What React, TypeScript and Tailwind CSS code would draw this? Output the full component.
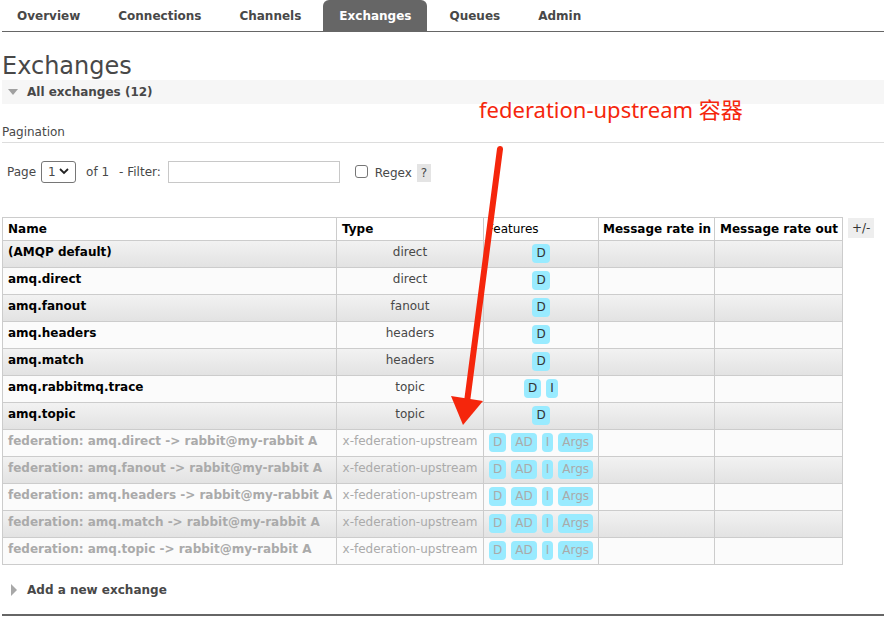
import React from "react";

type Row = { name: string; type: string; features: string[]; faded?: boolean };

const rows: Row[] = [
  { name: "(AMQP default)", type: "direct", features: ["D"] },
  { name: "amq.direct", type: "direct", features: ["D"] },
  { name: "amq.fanout", type: "fanout", features: ["D"] },
  { name: "amq.headers", type: "headers", features: ["D"] },
  { name: "amq.match", type: "headers", features: ["D"] },
  { name: "amq.rabbitmq.trace", type: "topic", features: ["D", "I"] },
  { name: "amq.topic", type: "topic", features: ["D"] },
  { name: "federation: amq.direct -> rabbit@my-rabbit A", type: "x-federation-upstream", features: ["D", "AD", "I", "Args"], faded: true },
  { name: "federation: amq.fanout -> rabbit@my-rabbit A", type: "x-federation-upstream", features: ["D", "AD", "I", "Args"], faded: true },
  { name: "federation: amq.headers -> rabbit@my-rabbit A", type: "x-federation-upstream", features: ["D", "AD", "I", "Args"], faded: true },
  { name: "federation: amq.match -> rabbit@my-rabbit A", type: "x-federation-upstream", features: ["D", "AD", "I", "Args"], faded: true },
  { name: "federation: amq.topic -> rabbit@my-rabbit A", type: "x-federation-upstream", features: ["D", "AD", "I", "Args"], faded: true },
];

const tabs = ["Overview", "Connections", "Channels", "Exchanges", "Queues", "Admin"];

export default function App() {
  return (
    <div className="relative w-[884px] h-[619px] overflow-hidden bg-white text-[#484848] font-['DejaVu_Sans',Verdana,sans-serif] text-[12px]">
      {/* NAV */}
      <div className="ml-[2px] border-b border-[#666] h-[32px]">
        <div className="flex -ml-[4px]">
          {tabs.map((t) => (
            <div
              key={t}
              className={`h-[31px] flex items-center px-[16px] mx-[3px] font-bold text-[12px] rounded-t-[6px] ${
                t === "Exchanges" ? "bg-[#666] text-white" : "text-[#484848]"
              }`}
            >
              {t}
            </div>
          ))}
        </div>
      </div>

      <div className="pl-[2px]">
        <h1 className="text-[24px] leading-[28px] mt-[20px] text-[#484848]">Exchanges</h1>

        {/* SECTION BAR */}
        <div className="h-[24px] bg-[#f6f6f6] flex items-center">
          <svg width="10" height="7" viewBox="0 0 10 7" className="ml-[6px] mr-[9px]">
            <path d="M0 0 L10 0 L5 6 Z" fill="#a0a0a0" />
          </svg>
          <span className="font-bold">All exchanges (12)</span>
        </div>

        <div className="mt-[19px] pb-[1px] border-b border-[#ddd] text-[12px]">Pagination</div>

        {/* PAGINATION ROW */}
        <div className="flex items-center mt-[17px] ml-[5px] h-[23px]">
          <span>Page</span>
          <div className="ml-[5px] w-[35px] h-[22px] border border-[#767676] rounded-[3px] flex items-center justify-between px-[6px]">
            <span>1</span>
            <svg width="10" height="7" viewBox="0 0 10 7">
              <path d="M1 1 L5 5 L9 1" stroke="#222" strokeWidth="1.8" fill="none" />
            </svg>
          </div>
          <span className="ml-[10px]">of 1</span>
          <span className="ml-[10px]">- Filter:</span>
          <div className="ml-[7px] w-[172px] h-[22px] border border-[#c8c8c8]" />
          <div className="ml-[15px] w-[13px] h-[13px] border border-[#767676] rounded-[3px]" />
          <span className="ml-[7px] mt-[2px]">Regex</span>
          <span className="ml-[5px] mt-[2px] bg-[#e4e4e4] px-[4px] h-[18px] leading-[18px]">?</span>
        </div>

        {/* TABLE */}
        <div className="flex items-start mt-[34px]">
          <table className="table-fixed border-collapse w-[840px]">
            <colgroup>
              <col className="w-[334px]" />
              <col className="w-[147px]" />
              <col className="w-[115px]" />
              <col className="w-[116px]" />
              <col className="w-[128px]" />
            </colgroup>
            <thead>
              <tr className="h-[23px] bg-white text-black">
                <th className="border border-[#ccc] text-left font-bold px-[5px] align-middle">Name</th>
                <th className="border border-[#ccc] text-left font-bold px-[5px] align-middle">Type</th>
                <th className="border border-[#ccc] text-left font-normal px-[3px] align-middle">Features</th>
                <th className="border border-[#ccc] text-left font-bold px-[4px] align-middle whitespace-nowrap">Message rate in</th>
                <th className="border border-[#ccc] text-left font-bold px-[5px] align-middle whitespace-nowrap">Message rate out</th>
              </tr>
            </thead>
            <tbody>
              {rows.map((r, i) => (
                <tr
                  key={r.name}
                  className={`h-[27px] ${i % 2 === 0 ? "bg-linear-to-b from-[#f2f2f2] to-[#e2e2e2]" : "bg-[#fbfbfb]"}`}
                >
                  <td
                    className={`border border-[#ccc] align-top pt-[2px] px-[5px] font-bold whitespace-nowrap ${
                      r.faded ? "text-[#aaa]" : "text-black"
                    }`}
                  >
                    {r.name}
                  </td>
                  <td
                    className={`border border-[#ccc] align-top pt-[2px] px-[3px] text-center whitespace-nowrap ${
                      r.faded ? "text-[#aaa]" : "text-[#484848]"
                    }`}
                  >
                    {r.type}
                  </td>
                  <td className="border border-[#ccc] align-top pt-[2px]">
                    <div className="flex justify-center gap-[5px]">
                      {r.features.map((f) => (
                        <span
                          key={f}
                          className={`bg-[#99ebff] rounded-[4px] px-[4px] h-[19px] leading-[19px] mt-[1px] ${
                            r.faded ? "text-[#aaa]" : "text-[#333]"
                          }`}
                        >
                          {f}
                        </span>
                      ))}
                    </div>
                  </td>
                  <td className="border border-[#ccc]" />
                  <td className="border border-[#ccc]" />
                </tr>
              ))}
            </tbody>
          </table>
          <span className="ml-[5px] mt-[1px] bg-[#eee] px-[4px] h-[20px] leading-[20px] text-[#333]">+/-</span>
        </div>

        {/* ADD NEW */}
        <div className="flex items-center mt-[17px] h-[16px]">
          <svg width="7" height="12" viewBox="0 0 7 12" className="ml-[9px] mr-[9px]">
            <path d="M0 0 L6 6 L0 12 Z" fill="#a8a8a8" />
          </svg>
          <span className="font-bold text-[#484848]">Add a new exchange</span>
        </div>
        <div className="mt-[16px] border-b-2 border-[#666]" />
      </div>

      {/* ANNOTATION */}
      <div className="absolute left-[479px] top-[94px] text-[22px] leading-[30px] text-[#f5260c] font-['Noto_Sans','Noto_Sans_CJK_SC',sans-serif]">
        federation-upstream 容器
      </div>
      <svg className="absolute left-0 top-0 pointer-events-none" width="884" height="619" viewBox="0 0 884 619">
        <line x1="500" y1="149" x2="467" y2="402" stroke="#f5260c" strokeWidth="6" strokeLinecap="round" />
        <path d="M451 396 L483 401 L463 425 Z" fill="#f5260c" />
      </svg>
    </div>
  );
}
